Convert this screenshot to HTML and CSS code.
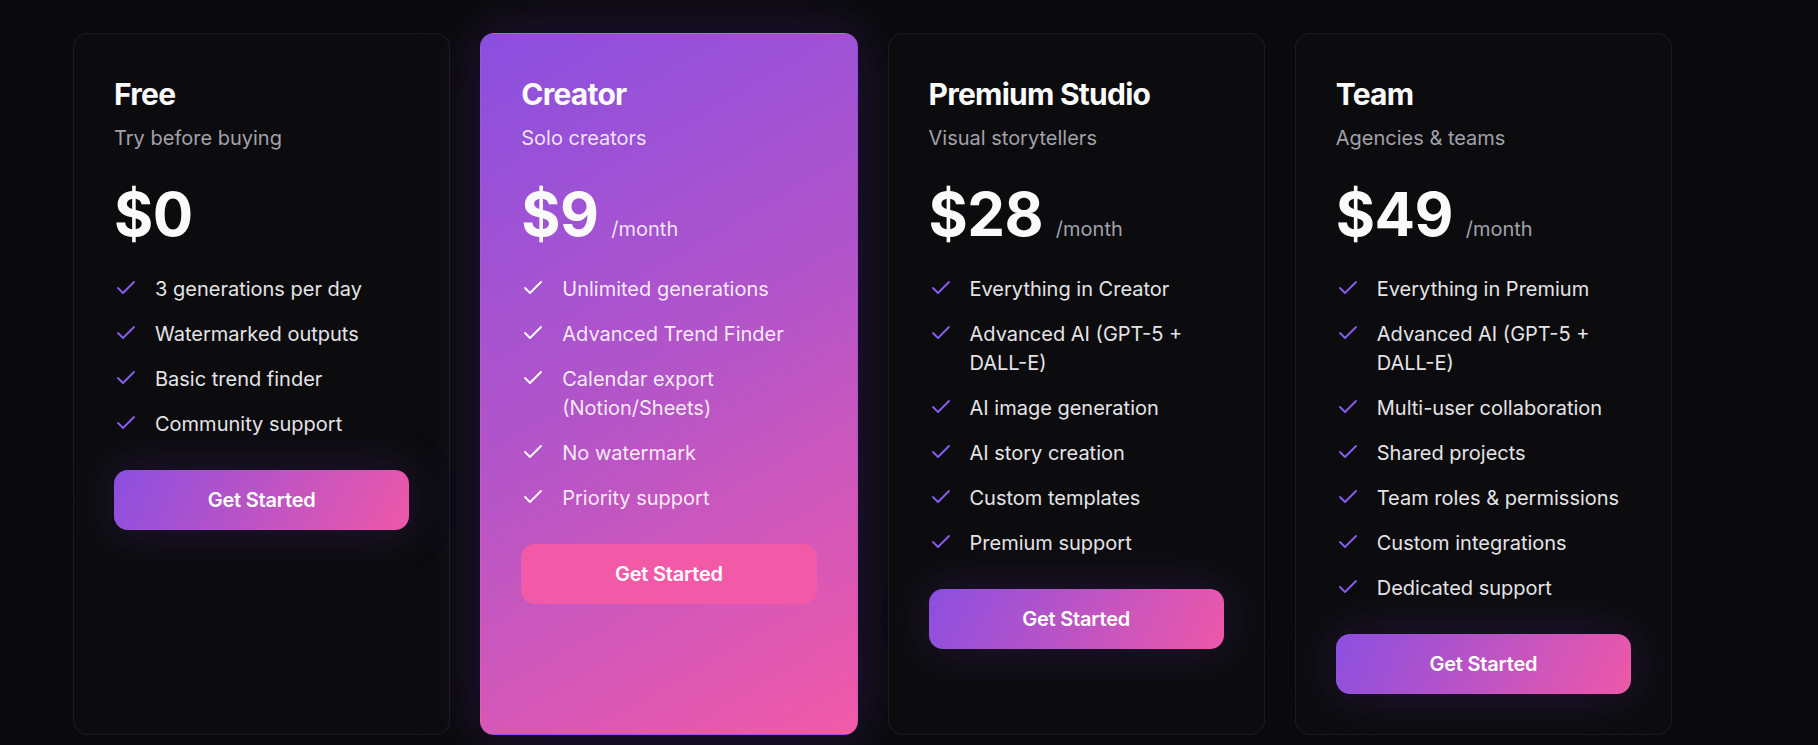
FILE: index.html
```html
<!DOCTYPE html>
<html lang="en">

<head>
    <meta charset="UTF-8">
    <meta name="viewport" content="width=device-width, initial-scale=1.0">
    <title>Pricing</title>
    <link rel="stylesheet" href="styles.css">
</head>

<body>
    <main class="plans">
        <section class="plan">
            <h2 class="plan-name">Free</h2>
            <p class="plan-tagline">Try before buying</p>
            <div class="plan-price"><span class="amount">$0</span></div>
            <ul class="features">
                <li><svg class="check" viewBox="0 0 24 24"><polyline points="20 6 9 17 4 12" /></svg><span>3 generations per day</span></li>
                <li><svg class="check" viewBox="0 0 24 24"><polyline points="20 6 9 17 4 12" /></svg><span>Watermarked outputs</span></li>
                <li><svg class="check" viewBox="0 0 24 24"><polyline points="20 6 9 17 4 12" /></svg><span>Basic trend finder</span></li>
                <li><svg class="check" viewBox="0 0 24 24"><polyline points="20 6 9 17 4 12" /></svg><span>Community support</span></li>
            </ul>
            <button type="button" class="cta">Get Started</button>
        </section>

        <section class="plan plan-featured">
            <h2 class="plan-name">Creator</h2>
            <p class="plan-tagline">Solo creators</p>
            <div class="plan-price"><span class="amount">$9</span><span class="period">/month</span></div>
            <ul class="features">
                <li><svg class="check" viewBox="0 0 24 24"><polyline points="20 6 9 17 4 12" /></svg><span>Unlimited generations</span></li>
                <li><svg class="check" viewBox="0 0 24 24"><polyline points="20 6 9 17 4 12" /></svg><span>Advanced Trend Finder</span></li>
                <li><svg class="check" viewBox="0 0 24 24"><polyline points="20 6 9 17 4 12" /></svg><span>Calendar export (Notion/Sheets)</span></li>
                <li><svg class="check" viewBox="0 0 24 24"><polyline points="20 6 9 17 4 12" /></svg><span>No watermark</span></li>
                <li><svg class="check" viewBox="0 0 24 24"><polyline points="20 6 9 17 4 12" /></svg><span>Priority support</span></li>
            </ul>
            <button type="button" class="cta">Get Started</button>
        </section>

        <section class="plan">
            <h2 class="plan-name">Premium Studio</h2>
            <p class="plan-tagline">Visual storytellers</p>
            <div class="plan-price"><span class="amount">$28</span><span class="period">/month</span></div>
            <ul class="features">
                <li><svg class="check" viewBox="0 0 24 24"><polyline points="20 6 9 17 4 12" /></svg><span>Everything in Creator</span></li>
                <li><svg class="check" viewBox="0 0 24 24"><polyline points="20 6 9 17 4 12" /></svg><span>Advanced AI (GPT-5 + DALL-E)</span></li>
                <li><svg class="check" viewBox="0 0 24 24"><polyline points="20 6 9 17 4 12" /></svg><span>AI image generation</span></li>
                <li><svg class="check" viewBox="0 0 24 24"><polyline points="20 6 9 17 4 12" /></svg><span>AI story creation</span></li>
                <li><svg class="check" viewBox="0 0 24 24"><polyline points="20 6 9 17 4 12" /></svg><span>Custom templates</span></li>
                <li><svg class="check" viewBox="0 0 24 24"><polyline points="20 6 9 17 4 12" /></svg><span>Premium support</span></li>
            </ul>
            <button type="button" class="cta">Get Started</button>
        </section>

        <section class="plan">
            <h2 class="plan-name">Team</h2>
            <p class="plan-tagline">Agencies &amp; teams</p>
            <div class="plan-price"><span class="amount">$49</span><span class="period">/month</span></div>
            <ul class="features">
                <li><svg class="check" viewBox="0 0 24 24"><polyline points="20 6 9 17 4 12" /></svg><span>Everything in Premium</span></li>
                <li><svg class="check" viewBox="0 0 24 24"><polyline points="20 6 9 17 4 12" /></svg><span>Advanced AI (GPT-5 + DALL-E)</span></li>
                <li><svg class="check" viewBox="0 0 24 24"><polyline points="20 6 9 17 4 12" /></svg><span>Multi-user collaboration</span></li>
                <li><svg class="check" viewBox="0 0 24 24"><polyline points="20 6 9 17 4 12" /></svg><span>Shared projects</span></li>
                <li><svg class="check" viewBox="0 0 24 24"><polyline points="20 6 9 17 4 12" /></svg><span>Team roles &amp; permissions</span></li>
                <li><svg class="check" viewBox="0 0 24 24"><polyline points="20 6 9 17 4 12" /></svg><span>Custom integrations</span></li>
                <li><svg class="check" viewBox="0 0 24 24"><polyline points="20 6 9 17 4 12" /></svg><span>Dedicated support</span></li>
            </ul>
            <button type="button" class="cta">Get Started</button>
        </section>
    </main>
</body>

</html>
```

FILE: styles.css
```css
body {
    margin: 0;
    min-height: 100vh;
    background: #0a0a0c;
    font-family: Inter, "Noto Sans", sans-serif;
    color: #fafafa;
}

.plans {
    display: grid;
    grid-template-columns: repeat(4, 1fr);
    gap: 30px;
    width: 1599px;
    padding: 33px 0 0 73px;
}

.plan {
    display: flex;
    flex-direction: column;
    padding: 40px;
    background: #0c0c0e;
    border: 1px solid #1c1c21;
    border-radius: 14px;
}

.plan-name {
    margin: 0;
    font-size: 30px;
    line-height: 40px;
    font-weight: 700;
    letter-spacing: -0.025em;
}

.plan-tagline {
    margin: 10px 0 0;
    font-size: 20px;
    line-height: 28px;
    color: #a1a1aa;
}

.plan-price {
    display: flex;
    align-items: baseline;
    gap: 13px;
    margin-top: 32px;
}

.amount {
    font-size: 60px;
    line-height: 60px;
    font-weight: 700;
    letter-spacing: -0.01em;
}

.period {
    font-size: 20px;
    color: #a1a1aa;
}

.features {
    list-style: none;
    margin: 31px 0 0;
    padding: 0;
    display: flex;
    flex-direction: column;
    gap: 16px;
}

.features li {
    display: flex;
    align-items: flex-start;
    gap: 17px;
    font-size: 20px;
    line-height: 29px;
    color: #e4e4e7;
}

.check {
    flex: none;
    width: 24px;
    height: 24px;
    margin-top: 1px;
    fill: none;
    stroke: #8b5cf6;
    stroke-width: 1.8;
    stroke-linecap: round;
    stroke-linejoin: round;
}

.cta {
    margin-top: 31px;
    height: 60px;
    border: none;
    border-radius: 14px;
    background: linear-gradient(115deg, #8b4fe0, #ee58a8);
    box-shadow: 0 0 50px rgba(120, 60, 220, 0.22);
    color: #fff;
    font-family: inherit;
    font-size: 20px;
    font-weight: 600;
    letter-spacing: -0.01em;
    cursor: pointer;
}

/* highlighted plan */
.plan-featured {
    border-color: transparent;
    background: linear-gradient(150deg, #8a4fe0 0%, #b555c8 50%, #f25aa8 100%);
    box-shadow: 0 0 60px rgba(110, 50, 200, 0.28);
}

.plan-featured .plan-tagline,
.plan-featured .period {
    color: rgba(255, 255, 255, 0.85);
}

.plan-featured .features li {
    color: rgba(255, 255, 255, 0.9);
}

.plan-featured .check {
    stroke: #fff;
}

.plan-featured .cta {
    background: #f25aa8;
    box-shadow: none;
}
```
